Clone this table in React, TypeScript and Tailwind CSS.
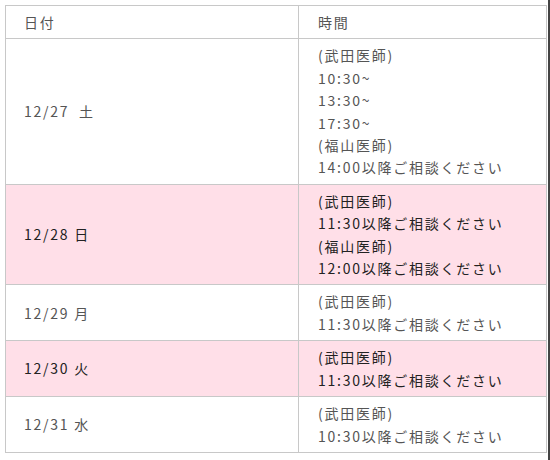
const rows = [
  {
    date: "12/27\u00a0 土",
    pink: false,
    lines: ["(武田医師)", "10:30~", "13:30~", "17:30~", "(福山医師)", "14:00以降ご相談ください"],
  },
  {
    date: "12/28 日",
    pink: true,
    lines: ["(武田医師)", "11:30以降ご相談ください", "(福山医師)", "12:00以降ご相談ください"],
  },
  { date: "12/29 月", pink: false, lines: ["(武田医師)", "11:30以降ご相談ください"] },
  { date: "12/30 火", pink: true, lines: ["(武田医師)", "11:30以降ご相談ください"] },
  { date: "12/31 水", pink: false, lines: ["(武田医師)", "10:30以降ご相談ください"] },
];

export default function App() {
  return (
    <div
      className="relative w-[550px] h-[460px] bg-white pt-[5px] pl-[5px]"
      style={{ fontFamily: '"Noto Sans CJK JP", "Noto Sans", sans-serif' }}
    >
      <table className="w-[542px] border-collapse text-[14px] leading-[22.4px] tracking-[0.125em]">
        <thead>
          <tr>
            <th className="w-[293px] border border-[#c8c8c8] py-[5px] pl-[18px] text-left font-normal text-[#555]">
              日付
            </th>
            <th className="border border-[#c8c8c8] py-[5px] pl-[19px] text-left font-normal text-[#555]">
              時間
            </th>
          </tr>
        </thead>
        <tbody>
          {rows.map((r) => (
            <tr key={r.date} className={r.pink ? "bg-[#ffdfe8] text-[#222]" : "text-[#555]"}>
              <td className="border border-[#c8c8c8] py-[5px] pl-[18px] align-middle">{r.date}</td>
              <td className="border border-[#c8c8c8] py-[5px] pl-[19px]">
                {r.lines.map((l, i) => (
                  <div key={i}>{l}</div>
                ))}
              </td>
            </tr>
          ))}
        </tbody>
      </table>
      <div className="absolute right-0 top-0 h-full w-[2px] bg-[#444]" />
    </div>
  );
}
